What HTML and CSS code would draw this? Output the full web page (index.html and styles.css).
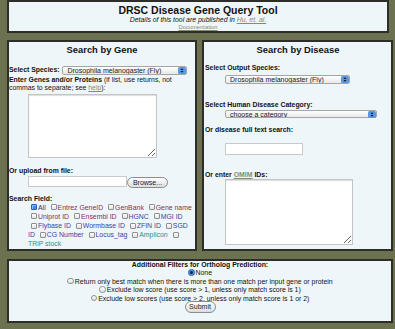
FILE: index.html
```html
<!DOCTYPE html>
<html lang="en">

<head>
    <meta charset="UTF-8">
    <meta name="viewport" content="width=device-width, initial-scale=1.0">
    <title>DRSC Disease Gene Query Tool</title>
    <link rel="stylesheet" href="styles.css">
</head>

<body>
    <div class="page">
        <div class="box header">
            <h1>DRSC Disease Gene Query Tool</h1>
            <p class="cite">Details of this tool are published in <a href="#">Hu, et. al.</a></p>
            <p class="doc"><a href="#">Documentation</a></p>
        </div>

        <form class="query">
            <div class="cols">
                <!-- gene side -->
                <div class="box panel gene">
                    <h2>Search by Gene</h2>
                    <div class="species-row">
                        <b>Select Species:</b>
                        <span class="pick">
                            <select class="species">
                                <option>Drosophila melanogaster (Fly)</option>
                            </select>
                            <svg viewBox="0 0 8 7"><rect width="8" height="7" rx="1.5" fill="#5b98e2"/><path d="M2.4 3 L4 1.3 L5.6 3 Z M2.4 4 L4 5.7 L5.6 4 Z" fill="#0e1b3d"/></svg>
                        </span>
                    </div>
                    <p class="note"><b>Enter Genes and/or Proteins</b> (if list, use returns, not<br>commas to separate; see <a href="#">help</a>):</p>
                    <textarea class="genes"></textarea>
                    <p class="label upload-label">Or upload from file:</p>
                    <div class="upload">
                        <input type="text" class="file-name">
                        <button type="button" class="pill browse">Browse...</button>
                    </div>
                    <p class="label field-label">Search Field:</p>
                    <div class="fields">
                        <label class="navy"><input type="checkbox" checked>All</label>
                        <label class="maroon"><input type="checkbox">Entrez GeneID</label>
                        <label class="maroon"><input type="checkbox">GenBank</label>
                        <label class="maroon"><input type="checkbox">Gene name</label><br>
                        <label class="maroon"><input type="checkbox">Uniprot ID</label>
                        <label class="maroon"><input type="checkbox">Ensembl ID</label>
                        <label class="blue"><input type="checkbox">HGNC</label>
                        <label class="blue"><input type="checkbox">MGI ID</label><br>
                        <label class="blue"><input type="checkbox">Flybase ID</label>
                        <label class="blue"><input type="checkbox">Wormbase ID</label>
                        <label class="blue"><input type="checkbox">ZFIN ID</label>
                        <label class="blue"><input type="checkbox">SGD<br>ID</label>
                        <label class="blue"><input type="checkbox">CG Number</label>
                        <label class="blue"><input type="checkbox">Locus_tag</label>
                        <label class="teal"><input type="checkbox">Amplicon</label>
                        <label class="teal"><input type="checkbox"><br>TRiP stock</label>
                    </div>
                </div>

                <!-- disease side -->
                <div class="box panel disease">
                    <h2>Search by Disease</h2>
                    <p class="label out-label">Select Output Species:</p>
                    <span class="pick indent out-pick">
                        <select class="species">
                            <option>Drosophila melanogaster (Fly)</option>
                        </select>
                        <svg viewBox="0 0 8 7"><rect width="8" height="7" rx="1.5" fill="#5b98e2"/><path d="M2.4 3 L4 1.3 L5.6 3 Z M2.4 4 L4 5.7 L5.6 4 Z" fill="#0e1b3d"/></svg>
                    </span>
                    <p class="label cat-label">Select Human Disease Category:</p>
                    <span class="pick indent cat-pick">
                        <select class="category">
                            <option>choose a category</option>
                        </select>
                        <svg viewBox="0 0 8 7"><rect width="8" height="7" rx="1.5" fill="#5b98e2"/><path d="M2.4 3 L4 1.3 L5.6 3 Z M2.4 4 L4 5.7 L5.6 4 Z" fill="#0e1b3d"/></svg>
                    </span>
                    <p class="label text-label">Or disease full text search:</p>
                    <input type="text" class="indent disease-text">
                    <p class="label omim-label">Or enter <a href="#">OMIM</a> IDs:</p>
                    <textarea class="indent omim"></textarea>
                </div>
            </div>

            <div class="box filters">
                <b>Additional Filters for Ortholog Prediction:</b><br>
                <label><input type="radio" name="filter" checked>None</label><br>
                <label><input type="radio" name="filter">Return only best match when there is more than one match per input gene or protein</label><br>
                <label><input type="radio" name="filter">Exclude low score (use score &gt; 1, unless only match score is 1)</label><br>
                <label><input type="radio" name="filter">Exclude low scores (use score &gt; 2, unless only match score is 1 or 2)</label><br>
                <button type="submit" class="pill submit">Submit</button>
            </div>
        </form>
    </div>
</body>

</html>
```

FILE: styles.css
```css
* {
    box-sizing: border-box;
}

body {
    margin: 0;
    background: #6c7150;
    font-family: "Liberation Sans", Arial, sans-serif;
    font-size: 6.9px;
    color: #111;
}

a {
    color: #878b6c;
}

p {
    margin: 0;
}

.page {
    padding-left: 7px;
    width: 393px;
}

.box {
    background: #eff6f9;
    border: 2px solid #2d2d29;
}

/* header */
.header {
    width: 382px;
    height: 33px;
    padding-top: 2px;
    text-align: center;
}

.header h1 {
    margin: 0;
    font-size: 10.5px;
    line-height: 12px;
}

.cite {
    font-style: italic;
    line-height: 8px;
}

.doc {
    font-size: 5.8px;
    line-height: 7.5px;
}

/* two columns */
.cols {
    display: grid;
    grid-template-columns: 190px 191px;
    gap: 5px;
    margin-top: 7px;
}

.panel {
    padding: 2px 0 0 0;
}

.panel.disease {
    padding-left: 1px;
}

.panel h2 {
    margin: 0;
    text-align: center;
    font-size: 9.4px;
    line-height: 11px;
}

.label {
    font-weight: bold;
    line-height: 8px;
}

.indent {
    margin-left: 20px;
}

/* selects */
.pick {
    position: relative;
    display: inline-block;
    vertical-align: middle;
}

.pick select {
    -webkit-appearance: none;
    appearance: none;
    display: block;
    font-family: inherit;
    font-size: 7px;
    height: 9px;
    line-height: 7px;
    padding: 0 10px 0 4px;
    border: 1px solid #a5a5a5;
    border-radius: 2px;
    background: linear-gradient(#fff, #e8e8e8);
    color: #222;
    width: 125px;
}

.pick svg {
    position: absolute;
    right: 1px;
    top: 1px;
    width: 8px;
    height: 7px;
    pointer-events: none;
}

.pick select.category {
    width: 152px;
}

/* gene side */
.species-row {
    margin-top: 10px;
    height: 10px;
    line-height: 10px;
}

.species-row .pick {
    margin-left: 1px;
}

.note {
    margin-top: 1px;
    line-height: 8.3px;
}

textarea {
    display: block;
    resize: both;
    background: #fff;
    border: 1px solid #c4c4c4;
    box-shadow: inset 0 1px 1px #ddd;
}

.genes {
    margin: 1px 0 0 19px;
    width: 129px;
    height: 64px;
}

.upload-label {
    margin-top: 9.5px;
}

.upload {
    margin-left: 19px;
    display: flex;
    align-items: center;
    height: 12px;
}

.file-name {
    width: 99px;
    height: 11px;
    border: 1px solid #c9c9c9;
    background: #fff;
}

.pill {
    font-family: inherit;
    font-size: 7px;
    color: #222;
    border: 1px solid #8c8c8c;
    border-radius: 6px;
    background: linear-gradient(#fff, #dcdcdc);
    padding: 0;
    height: 11px;
    line-height: 9px;
}

.browse {
    width: 41px;
    margin-top: 2px;
}

.field-label {
    margin-top: 7.5px;
}

.fields {
    margin: 0 0 0 19px;
    line-height: 9.2px;
    white-space: nowrap;
}

.fields input,
.filters input {
    -webkit-appearance: none;
    appearance: none;
    width: 6px;
    height: 6px;
    margin: 0 1px 0 3px;
    vertical-align: -0.5px;
    border: 1px solid #8f8f8f;
    background: linear-gradient(#fff, #e2e2e2);
}

.fields input {
    border-radius: 1px;
}

.fields input:checked {
    background: #4a8be0;
    border-color: #2a5fb0;
    box-shadow: inset 1px 1px 0 #fff6;
}

.navy {
    color: #25306f;
}

.maroon {
    color: #8c2c4f;
}

.blue {
    color: #4040a6;
}

.teal {
    color: #2b8e8a;
}

/* disease side */
.out-label {
    margin-top: 9px;
}

.out-pick {
    margin-top: 3px;
}

.disease .pick select {
    height: 8.5px;
}

.cat-label {
    margin-top: 17px;
}

.cat-pick {
    margin-top: 1px;
}

.text-label {
    margin-top: 8px;
}

.disease-text {
    display: block;
    margin-top: 9px;
    width: 78px;
    height: 12px;
    border: 1px solid #c9c9c9;
    background: #fff;
}

.omim-label {
    margin-top: 16px;
}

.omim {
    width: 128px;
    height: 66px;
}

/* filters */
.filters {
    margin-top: 8px;
    width: 386px;
    text-align: center;
    line-height: 8.5px;
    padding-bottom: 8px;
}

.filters input {
    border-radius: 50%;
    width: 6.5px;
    height: 6.5px;
    margin: 0 1px 0 0;
}

.filters input:checked {
    background: radial-gradient(circle, #16254d 0 1.2px, #4d8fe2 1.6px);
    border-color: #2a5fb0;
}

.submit {
    width: 31px;
    height: 12px;
    margin-top: -2px;
    line-height: 10px;
}
```
